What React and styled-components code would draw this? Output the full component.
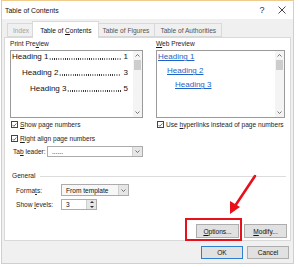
import React from "react";
import styled, { createGlobalStyle } from "styled-components";

const GlobalStyle = createGlobalStyle`
  html, body {
    margin: 0;
    padding: 0;
    background: #fff;
  }
  body {
    font-family: "Liberation Sans", Arial, sans-serif;
    font-size: 6.6px;
    color: #1e1e1e;
  }
`;

const Page = styled.div`
  position: relative;
  width: 300px;
  height: 267px;
  overflow: hidden;
  background: #fff;
`;

const Window = styled.div`
  margin-left: 1px;
  width: 293px;
  height: 264px;
  box-sizing: border-box;
  border: 1px solid #f0cb8e;
  display: flex;
  flex-direction: column;
`;

const TitleBar = styled.div`
  height: 18px;
  flex: none;
  display: flex;
  align-items: center;
  padding-left: 3px;
  background: #fff;
  color: #111;
  font-size: 6.9px;
`;

const Title = styled.span`
  flex: 1;
  line-height: 9px;
`;

const CaptionButton = styled.span`
  width: 20px;
  height: 18px;
  display: flex;
  align-items: center;
  justify-content: center;
  font-size: 9px;
  color: #333;
  margin-right: ${(p) => p.mr || 0}px;
`;

const Body = styled.div`
  flex: 1;
  background: #f0f0f0;
  padding: 2px 2px 0 2px;
  display: flex;
  flex-direction: column;
`;

const TabRow = styled.div`
  height: 16px;
  display: flex;
  align-items: flex-end;
  padding-left: 4px;
`;

const Tab = styled.div`
  position: relative;
  z-index: ${(p) => (p.active ? 1 : 0)};
  box-sizing: border-box;
  height: ${(p) => (p.active ? 17 : 14)}px;
  padding: 0 ${(p) => (p.active ? 7 : 5)}px;
  margin-left: ${(p) => (p.active ? -3 : -1)}px;
  margin-right: ${(p) => (p.active ? -2 : 0)}px;
  margin-bottom: ${(p) => (p.active ? -1 : 0)}px;
  border: 1px solid #d9d9d9;
  border-bottom: ${(p) => (p.active ? "none" : "1px solid #d9d9d9")};
  background: ${(p) => (p.active ? "#fff" : "#f0f0f0")};
  color: ${(p) => (p.disabled ? "#a3a3a3" : p.active ? "#111" : "#555")};
  display: flex;
  align-items: center;
  white-space: nowrap;
`;

const Panel = styled.div`
  height: 204px;
  box-sizing: border-box;
  background: #fff;
  border: 1px solid #d9d9d9;
  padding: 2px 4px 0 5px;
  display: flex;
  flex-direction: column;
`;

const PreviewGrid = styled.div`
  display: grid;
  grid-template-columns: 133px 129px;
  column-gap: 13px;
`;

const Column = styled.div`
  display: flex;
  flex-direction: column;
`;

const Label = styled.div`
  line-height: 8px;
  height: 8px;
  white-space: nowrap;
`;

const PreviewBox = styled.div`
  margin-top: 2px;
  height: 68px;
  box-sizing: border-box;
  border: 1px solid #9a9a9a;
  display: flex;
`;

const PreviewList = styled.div`
  flex: 1;
  min-width: 0;
  padding-top: 1px;
  display: flex;
  flex-direction: column;
  gap: ${(p) => p.gap}px;
`;

const TocRow = styled.div`
  display: flex;
  line-height: 9px;
  height: 9px;
  font-size: 8px;
  color: #111;
  padding-left: ${(p) => p.indent}px;
  padding-right: 5px;
`;

/* dotted tab leader, drawn as a repeating dot pattern */
const Leader = styled.span`
  flex: 1;
  margin: 0 3px 0 1px;
  background-image: radial-gradient(circle, #222 0.55px, transparent 0.8px);
  background-size: 2.2px 2px;
  background-repeat: repeat-x;
  background-position: 0 6px;
`;

const WebLink = styled.span`
  line-height: 9px;
  height: 9px;
  font-size: 8px;
  color: #1f63c6;
  text-decoration: underline;
  padding-left: ${(p) => p.indent}px;
`;

const Scrollbar = styled.div`
  width: 9px;
  background: #f4f4f4;
  display: flex;
  flex-direction: column;
  align-items: center;
  padding: 3px 0;
  box-sizing: border-box;
`;

const Thumb = styled.div`
  width: 7px;
  height: 10px;
  margin-top: 3px;
  background: #cdcdcd;
`;

const Spacer = styled.div`
  flex: 1;
`;

const CheckRow = styled.div`
  display: flex;
  align-items: center;
  gap: 2px;
  height: 9px;
  line-height: 9px;
  margin-top: ${(p) => p.mt}px;
  margin-left: 1px;
  white-space: nowrap;
`;

const CheckBox = styled.span`
  width: 7px;
  height: 7px;
  box-sizing: border-box;
  border: 1px solid #444;
  background: #fff;
  display: flex;
  align-items: center;
  justify-content: center;
`;

const FieldRow = styled.div`
  display: flex;
  align-items: center;
  height: ${(p) => p.h}px;
  margin-top: ${(p) => p.mt}px;
  padding-left: ${(p) => p.pl}px;
`;

const FieldLabel = styled.span`
  width: ${(p) => (p.w ? `${p.w}px` : "auto")};
  flex: none;
  white-space: nowrap;
`;

const Select = styled.div`
  width: ${(p) => p.w}px;
  height: 100%;
  margin-left: ${(p) => (p.push ? "auto" : "0")};
  box-sizing: border-box;
  border: 1px solid #acacac;
  background: ${(p) => p.bg || "#fff"};
  display: flex;
  align-items: stretch;
`;

const SelectText = styled.span`
  flex: 1;
  padding-left: 4px;
  display: flex;
  align-items: center;
  color: #111;
`;

const DropButton = styled.span`
  width: 9px;
  background: #e6e6e6;
  border-left: 1px solid #d0d0d0;
  display: flex;
  align-items: center;
  justify-content: center;
`;

const SpinButtons = styled.span`
  width: 9px;
  background: #e6e6e6;
  border-left: 1px solid #d0d0d0;
  display: flex;
  flex-direction: column;
  align-items: center;
  justify-content: space-around;
`;

const SectionHeader = styled.div`
  margin-top: 15px;
  height: 8px;
  line-height: 8px;
  display: flex;
  align-items: center;
  padding-left: 2px;
`;

const Rule = styled.div`
  flex: 1;
  height: 1px;
  margin-left: 5px;
  background: #dcdcdc;
`;

const ButtonRow = styled.div`
  display: flex;
  justify-content: flex-end;
  gap: ${(p) => p.gap}px;
  margin-top: ${(p) => p.mt || 0}px;
  margin-right: ${(p) => p.mr || 0}px;
  padding-top: ${(p) => p.pt || 0}px;
  padding-right: ${(p) => p.pr || 0}px;
`;

const Button = styled.div`
  width: ${(p) => p.w}px;
  height: ${(p) => p.h}px;
  box-sizing: border-box;
  border: 1px solid ${(p) => (p.primary ? "#2f7fd0" : "#adadad")};
  background: #e1e1e1;
  display: flex;
  align-items: center;
  justify-content: center;
  color: #111;
`;

const Annotation = styled.svg`
  position: absolute;
  left: 0;
  top: 0;
  pointer-events: none;
`;

const U = styled.span`
  text-decoration: underline;
`;

const Check = () => (
  <svg width="7" height="6" viewBox="0 0 7 6">
    <polyline points="0.8,3 2.6,4.8 6.2,0.8" fill="none" stroke="#222" strokeWidth="0.9" />
  </svg>
);

const ChevronDown = () => (
  <svg width="5" height="3" viewBox="0 0 5 3">
    <polyline points="0.5,0.5 2.5,2.5 4.5,0.5" fill="none" stroke="#555" strokeWidth="0.8" />
  </svg>
);

const ChevronUp = () => (
  <svg width="5" height="3" viewBox="0 0 5 3">
    <polyline points="0.5,2.5 2.5,0.5 4.5,2.5" fill="none" stroke="#555" strokeWidth="0.8" />
  </svg>
);

const Tri = ({ up }) => (
  <svg width="4" height="2" viewBox="0 0 4 2">
    <polygon points={up ? "0,2 2,0 4,2" : "0,0 2,2 4,0"} fill="#333" />
  </svg>
);

const PreviewScroll = () => (
  <Scrollbar>
    <ChevronUp />
    <Thumb />
    <Spacer />
    <ChevronDown />
  </Scrollbar>
);

const tocRows = [
  { name: "Heading 1", page: 1, indent: 1 },
  { name: "Heading 2", page: 3, indent: 11 },
  { name: "Heading 3", page: 5, indent: 19 },
];

const webRows = [
  { name: "Heading 1", indent: 1 },
  { name: "Heading 2", indent: 10 },
  { name: "Heading 3", indent: 18 },
];

export default function App() {
  return (
    <Page>
      <GlobalStyle />
      <Window>
        <TitleBar>
          <Title>Table of Contents</Title>
          <CaptionButton>?</CaptionButton>
          <CaptionButton mr={1}>
            <svg width="8" height="8" viewBox="0 0 8 8">
              <path d="M0.5 0.5 L7.5 7.5 M7.5 0.5 L0.5 7.5" stroke="#333" strokeWidth="0.9" />
            </svg>
          </CaptionButton>
        </TitleBar>
        <Body>
          <TabRow>
            <Tab disabled>Index</Tab>
            <Tab active>
              Table of&nbsp;<U>C</U>ontents
            </Tab>
            <Tab>Table of Figures</Tab>
            <Tab>Table of Authorities</Tab>
          </TabRow>
          <Panel>
            <PreviewGrid>
              <Column>
                <Label>
                  Print Pre<U>v</U>iew
                </Label>
                <PreviewBox>
                  <PreviewList gap={7}>
                    {tocRows.map((r) => (
                      <TocRow key={r.name} indent={r.indent}>
                        <span>{r.name}</span>
                        <Leader />
                        <span>{r.page}</span>
                      </TocRow>
                    ))}
                  </PreviewList>
                  <PreviewScroll />
                </PreviewBox>
                <CheckRow mt={2}>
                  <CheckBox>
                    <Check />
                  </CheckBox>
                  <span>
                    <U>S</U>how page numbers
                  </span>
                </CheckRow>
                <CheckRow mt={5}>
                  <CheckBox>
                    <Check />
                  </CheckBox>
                  <span>
                    <U>R</U>ight align page numbers
                  </span>
                </CheckRow>
                <FieldRow h={11} mt={3} pl={3}>
                  <FieldLabel>
                    Ta<U>b</U> leader:
                  </FieldLabel>
                  <Select w={96} push>
                    <SelectText>......</SelectText>
                    <DropButton>
                      <ChevronDown />
                    </DropButton>
                  </Select>
                </FieldRow>
              </Column>
              <Column>
                <Label>
                  <U>W</U>eb Preview
                </Label>
                <PreviewBox>
                  <PreviewList gap={5}>
                    {webRows.map((r) => (
                      <WebLink key={r.name} indent={r.indent}>
                        {r.name}
                      </WebLink>
                    ))}
                  </PreviewList>
                  <PreviewScroll />
                </PreviewBox>
                <CheckRow mt={2}>
                  <CheckBox>
                    <Check />
                  </CheckBox>
                  <span>
                    Use <U>h</U>yperlinks instead of page numbers
                  </span>
                </CheckRow>
              </Column>
            </PreviewGrid>

            <SectionHeader>
              <span>General</span>
              <Rule />
            </SectionHeader>
            <FieldRow h={12} mt={4} pl={6}>
              <FieldLabel w={45}>
                Forma<U>t</U>s:
              </FieldLabel>
              <Select w={68} bg="#f7f7f7">
                <SelectText>From template</SelectText>
                <DropButton>
                  <ChevronDown />
                </DropButton>
              </Select>
            </FieldRow>
            <FieldRow h={11} mt={3} pl={6}>
              <FieldLabel w={45}>
                Show <U>l</U>evels:
              </FieldLabel>
              <Select w={36}>
                <SelectText>3</SelectText>
                <SpinButtons>
                  <Tri up />
                  <Tri />
                </SpinButtons>
              </Select>
            </FieldRow>

            <ButtonRow gap={5} mt={14} mr={-1}>
              <Button w={43} h={14}>
                <span>
                  <U>O</U>ptions...
                </span>
              </Button>
              <Button w={43} h={14}>
                <span>
                  <U>M</U>odify...
                </span>
              </Button>
            </ButtonRow>
          </Panel>
          <ButtonRow gap={4} pt={5} pr={2}>
            <Button w={42} h={13} primary>
              OK
            </Button>
            <Button w={42} h={13}>
              Cancel
            </Button>
          </ButtonRow>
        </Body>
      </Window>

      <Annotation width="300" height="267" viewBox="0 0 300 267">
        <rect x="186" y="219" width="55" height="21" fill="none" stroke="#e8101a" strokeWidth="2" />
        <line x1="255" y1="176" x2="235" y2="206" stroke="#e8101a" strokeWidth="2.6" strokeLinecap="round" />
        <polygon points="230,214 230,201 240,207" fill="#e8101a" />
      </Annotation>
    </Page>
  );
}
